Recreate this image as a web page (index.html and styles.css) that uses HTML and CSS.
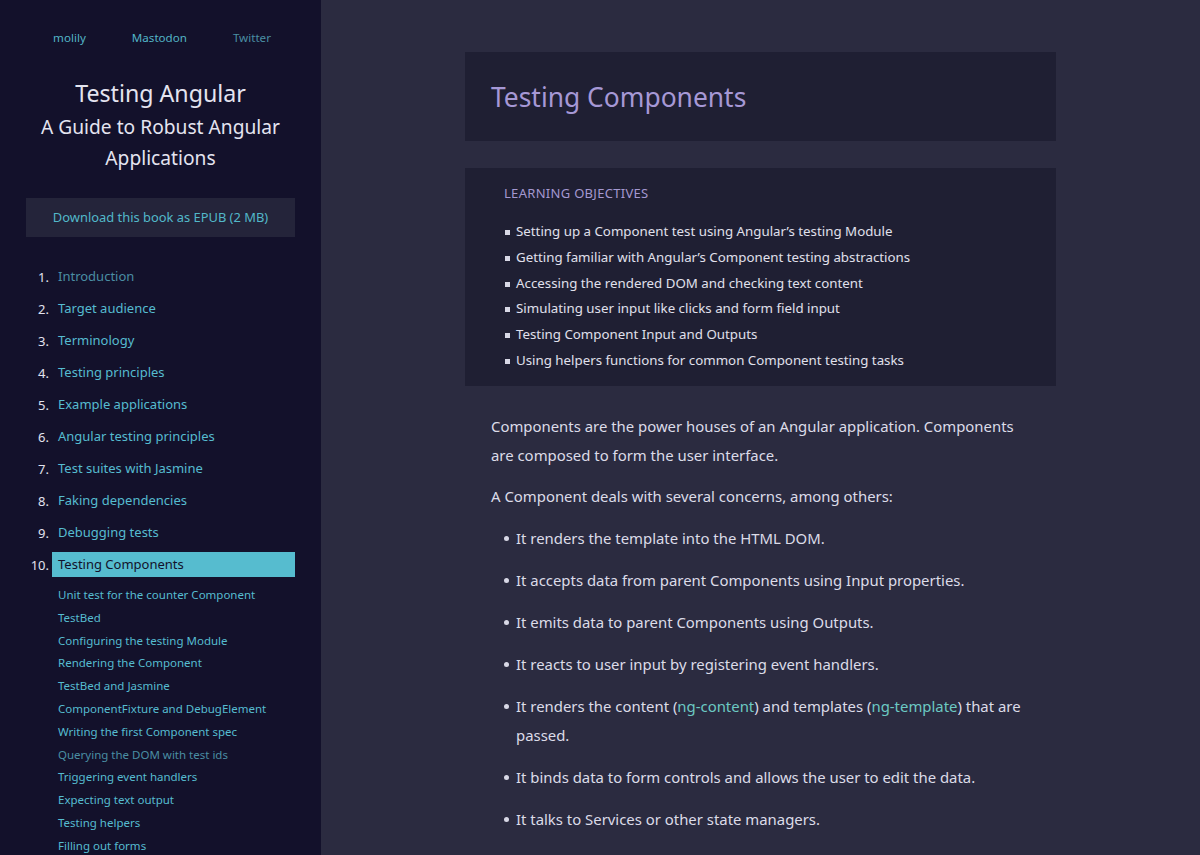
FILE: index.html
```html
<!DOCTYPE html>
<html lang="en">
<head>
<meta charset="utf-8">
<title>Testing Components – Testing Angular</title>
<link rel="stylesheet" href="styles.css">
</head>
<body>
<div class="page">
  <aside class="sidebar">
    <nav class="social">
      <a href="#">molily</a>
      <a href="#">Mastodon</a>
      <a href="#" class="visited">Twitter</a>
    </nav>
    <div class="book-title">
      <div class="t1">Testing Angular</div>
      <div class="t2">A Guide to Robust Angular Applications</div>
    </div>
    <a class="download" href="#">Download this book as EPUB (2 MB)</a>
    <ol class="toc">
      <li><span class="num">1.</span><a href="#" class="visited">Introduction</a></li>
      <li><span class="num">2.</span><a href="#">Target audience</a></li>
      <li><span class="num">3.</span><a href="#">Terminology</a></li>
      <li><span class="num">4.</span><a href="#">Testing principles</a></li>
      <li><span class="num">5.</span><a href="#">Example applications</a></li>
      <li><span class="num">6.</span><a href="#">Angular testing principles</a></li>
      <li><span class="num">7.</span><a href="#">Test suites with Jasmine</a></li>
      <li><span class="num">8.</span><a href="#">Faking dependencies</a></li>
      <li><span class="num">9.</span><a href="#">Debugging tests</a></li>
      <li class="active"><span class="num">10.</span><a href="#">Testing Components</a></li>
    </ol>
    <ul class="subtoc">
      <li><a href="#">Unit test for the counter Component</a></li>
      <li><a href="#">TestBed</a></li>
      <li><a href="#">Configuring the testing Module</a></li>
      <li><a href="#">Rendering the Component</a></li>
      <li><a href="#">TestBed and Jasmine</a></li>
      <li><a href="#">ComponentFixture and DebugElement</a></li>
      <li><a href="#">Writing the first Component spec</a></li>
      <li><a href="#" class="visited">Querying the DOM with test ids</a></li>
      <li><a href="#">Triggering event handlers</a></li>
      <li><a href="#">Expecting text output</a></li>
      <li><a href="#">Testing helpers</a></li>
      <li><a href="#">Filling out forms</a></li>
    </ul>
  </aside>
  <main class="main">
    <article class="content">
      <header class="card heading">
        <h1>Testing Components</h1>
      </header>
      <section class="card objectives">
        <h2>Learning objectives</h2>
        <ul>
          <li>Setting up a Component test using Angular’s testing Module</li>
          <li>Getting familiar with Angular’s Component testing abstractions</li>
          <li>Accessing the rendered DOM and checking text content</li>
          <li>Simulating user input like clicks and form field input</li>
          <li>Testing Component Input and Outputs</li>
          <li>Using helpers functions for common Component testing tasks</li>
        </ul>
      </section>
      <div class="text">
        <p>Components are the power houses of an Angular application. Components are composed to form the user interface.</p>
        <p>A Component deals with several concerns, among others:</p>
        <ul class="bullets">
          <li>It renders the template into the HTML DOM.</li>
          <li>It accepts data from parent Components using Input properties.</li>
          <li>It emits data to parent Components using Outputs.</li>
          <li>It reacts to user input by registering event handlers.</li>
          <li>It renders the content (<code>ng-content</code>) and templates (<code>ng-template</code>) that are passed.</li>
          <li>It binds data to form controls and allows the user to edit the data.</li>
          <li>It talks to Services or other state managers.</li>
          <li>It uses routing information like the current URL and URL parameters.</li>
        </ul>
      </div>
    </article>
  </main>
</div>
</body>
</html>
```
FILE: styles.css
```css
* { box-sizing: border-box; }
html, body {
  margin: 0;
  height: 100%;
  overflow: hidden;
}
body {
  font-family: "Noto Sans", "Open Sans", sans-serif;
  background: #2b2b40;
  color: #dcdce8;
}
a { text-decoration: none; }

.page {
  display: flex;
  height: 855px;
}

.sidebar {
  width: 321px;
  flex: 0 0 321px;
  background: #13112b;
  padding: 29px 26px 0 26px;
  overflow: hidden;
}
.social {
  display: flex;
  justify-content: center;
  gap: 46px;
  font-size: 11.6px;
  line-height: 17px;
  padding-left: 3px;
}
.social a { color: #52b4c6; }
.social a.visited { color: #4a8ea3; }

.book-title {
  text-align: center;
  color: #e4e4f0;
  margin-top: 31px;
}
.book-title .t1 {
  font-size: 23.2px;
  line-height: 32px;
}
.book-title .t2 {
  font-size: 19.2px;
  line-height: 31px;
  margin-top: 2px;
  padding: 0 8px;
}
.download {
  display: block;
  margin-top: 25px;
  background: #24243a;
  color: #52b8c9;
  text-align: center;
  font-size: 12.9px;
  height: 39px;
  line-height: 39px;
}

.toc {
  list-style: none;
  margin: 27px 0 0 0;
  padding: 0;
  font-size: 13px;
}
.toc li {
  display: flex;
  align-items: center;
  height: 25px;
  margin-bottom: 7px;
}
.toc li.active { margin-top: 1px; }
.toc .num {
  width: 23px;
  text-align: right;
  color: #e2e2ee;
  flex: 0 0 23px;
}
.toc a {
  flex: 1;
  margin-left: 3px;
  padding-left: 6px;
  height: 25px;
  line-height: 25px;
  color: #56bcd0;
}
.toc a.visited { color: #4a8ea3; }
.toc li.active a {
  background: #56bccf;
  color: #13112b;
}

.subtoc {
  list-style: none;
  margin: 3px 0 0 0;
  padding: 0 0 0 32px;
  font-size: 11.5px;
}
.subtoc li {
  line-height: 22.8px;
  height: 22.8px;
}
.subtoc a { color: #56bcd0; }
.subtoc a.visited { color: #4a8ea3; }

.main {
  flex: 1;
  display: flex;
  justify-content: center;
  padding-top: 52px;
  overflow: hidden;
}
.content {
  width: 591px;
}
.card {
  background: #1f1f33;
}
.heading {
  height: 89px;
  padding: 0 26px;
  display: flex;
  align-items: center;
}
.heading h1 {
  margin: 0;
  font-weight: 400;
  font-size: 26.4px;
  color: #a698d6;
}
.objectives {
  margin-top: 27px;
  padding: 16px 26px 12px 39px;
}
.objectives h2 {
  margin: 0;
  font-weight: 400;
  font-size: 13px;
  text-transform: uppercase;
  letter-spacing: 0.3px;
  color: #a498d0;
  line-height: 18px;
}
.objectives ul {
  list-style: none;
  margin: 17px 0 0 0;
  padding: 0;
  font-size: 13.3px;
  color: #e0e0ec;
}
.objectives li {
  line-height: 25.8px;
  position: relative;
  padding-left: 12px;
}
.objectives li::before {
  content: "";
  position: absolute;
  left: 1px;
  top: 11px;
  width: 5px;
  height: 5px;
  background: #d8d8e6;
}

.text {
  padding: 26px 26px 0 26px;
  font-size: 14.9px;
  line-height: 29px;
  color: #dcdce8;
}
.text p {
  margin: 0 0 12px 0;
}
.bullets {
  list-style: none;
  margin: 0;
  padding: 0 0 0 25px;
}
.bullets li {
  position: relative;
  margin-top: 13px;
}
.bullets li::before {
  content: "";
  position: absolute;
  left: -12px;
  top: 12px;
  width: 5px;
  height: 5px;
  border-radius: 50%;
  background: #d8d8e6;
}
.bullets code {
  font-family: inherit;
  color: #6cc9c3;
}
```
